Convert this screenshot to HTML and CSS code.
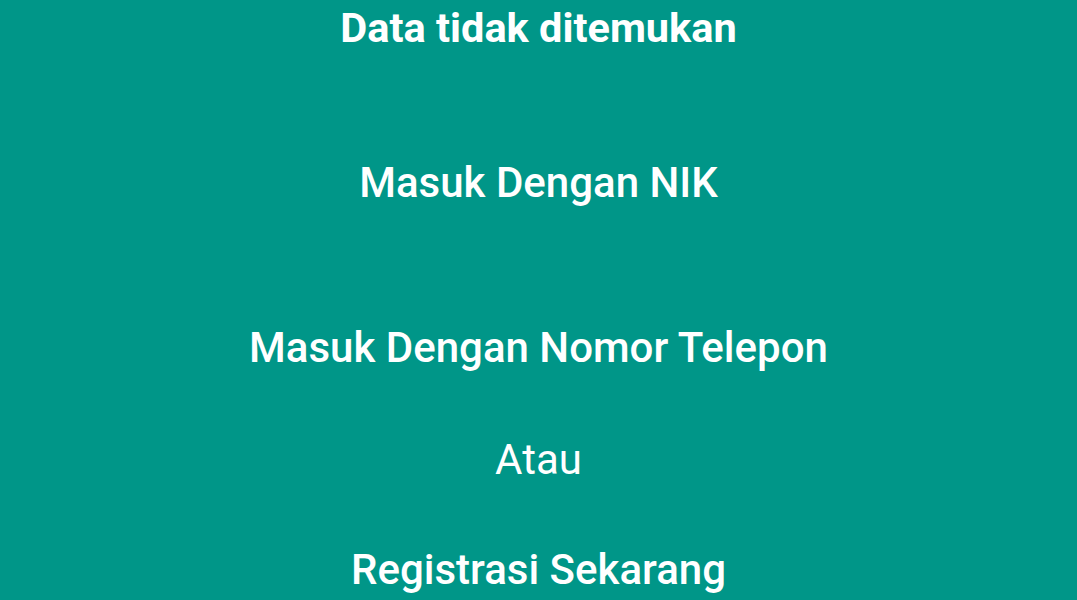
FILE: index.html
```html
<!DOCTYPE html>
<html lang="id">
<head>
<meta charset="utf-8">
<title>Masuk</title>
<link rel="stylesheet" href="styles.css">
</head>
<body>
<main class="screen">
  <h1 class="title">Data tidak ditemukan</h1>
  <button class="action action-nik">Masuk Dengan NIK</button>
  <button class="action action-phone">Masuk Dengan Nomor Telepon</button>
  <p class="or">Atau</p>
  <button class="action action-register">Registrasi Sekarang</button>
</main>
</body>
</html>
```

FILE: styles.css
```css
html, body {
  margin: 0;
  padding: 0;
  height: 100%;
}
body {
  background: #009688;
  font-family: Roboto, "Noto Sans", sans-serif;
  color: #ffffff;
  overflow: hidden;
}
.screen {
  display: flex;
  flex-direction: column;
  align-items: center;
}
.title, .action, .or {
  margin: 0;
  padding: 0;
  height: 56px;
  line-height: 56px;
  font-size: 42px;
  color: #ffffff;
  text-align: center;
  white-space: nowrap;
}
.title {
  font-size: 41.5px;
  font-weight: 700;
}
.action {
  background: none;
  border: none;
  font-family: inherit;
  font-weight: 500;
}
.or {
  font-weight: 400;
}
.action-nik { margin-top: 99px; }
.action-phone { margin-top: 109px; }
.or { margin-top: 56px; }
.action-register { margin-top: 54px; }
```
